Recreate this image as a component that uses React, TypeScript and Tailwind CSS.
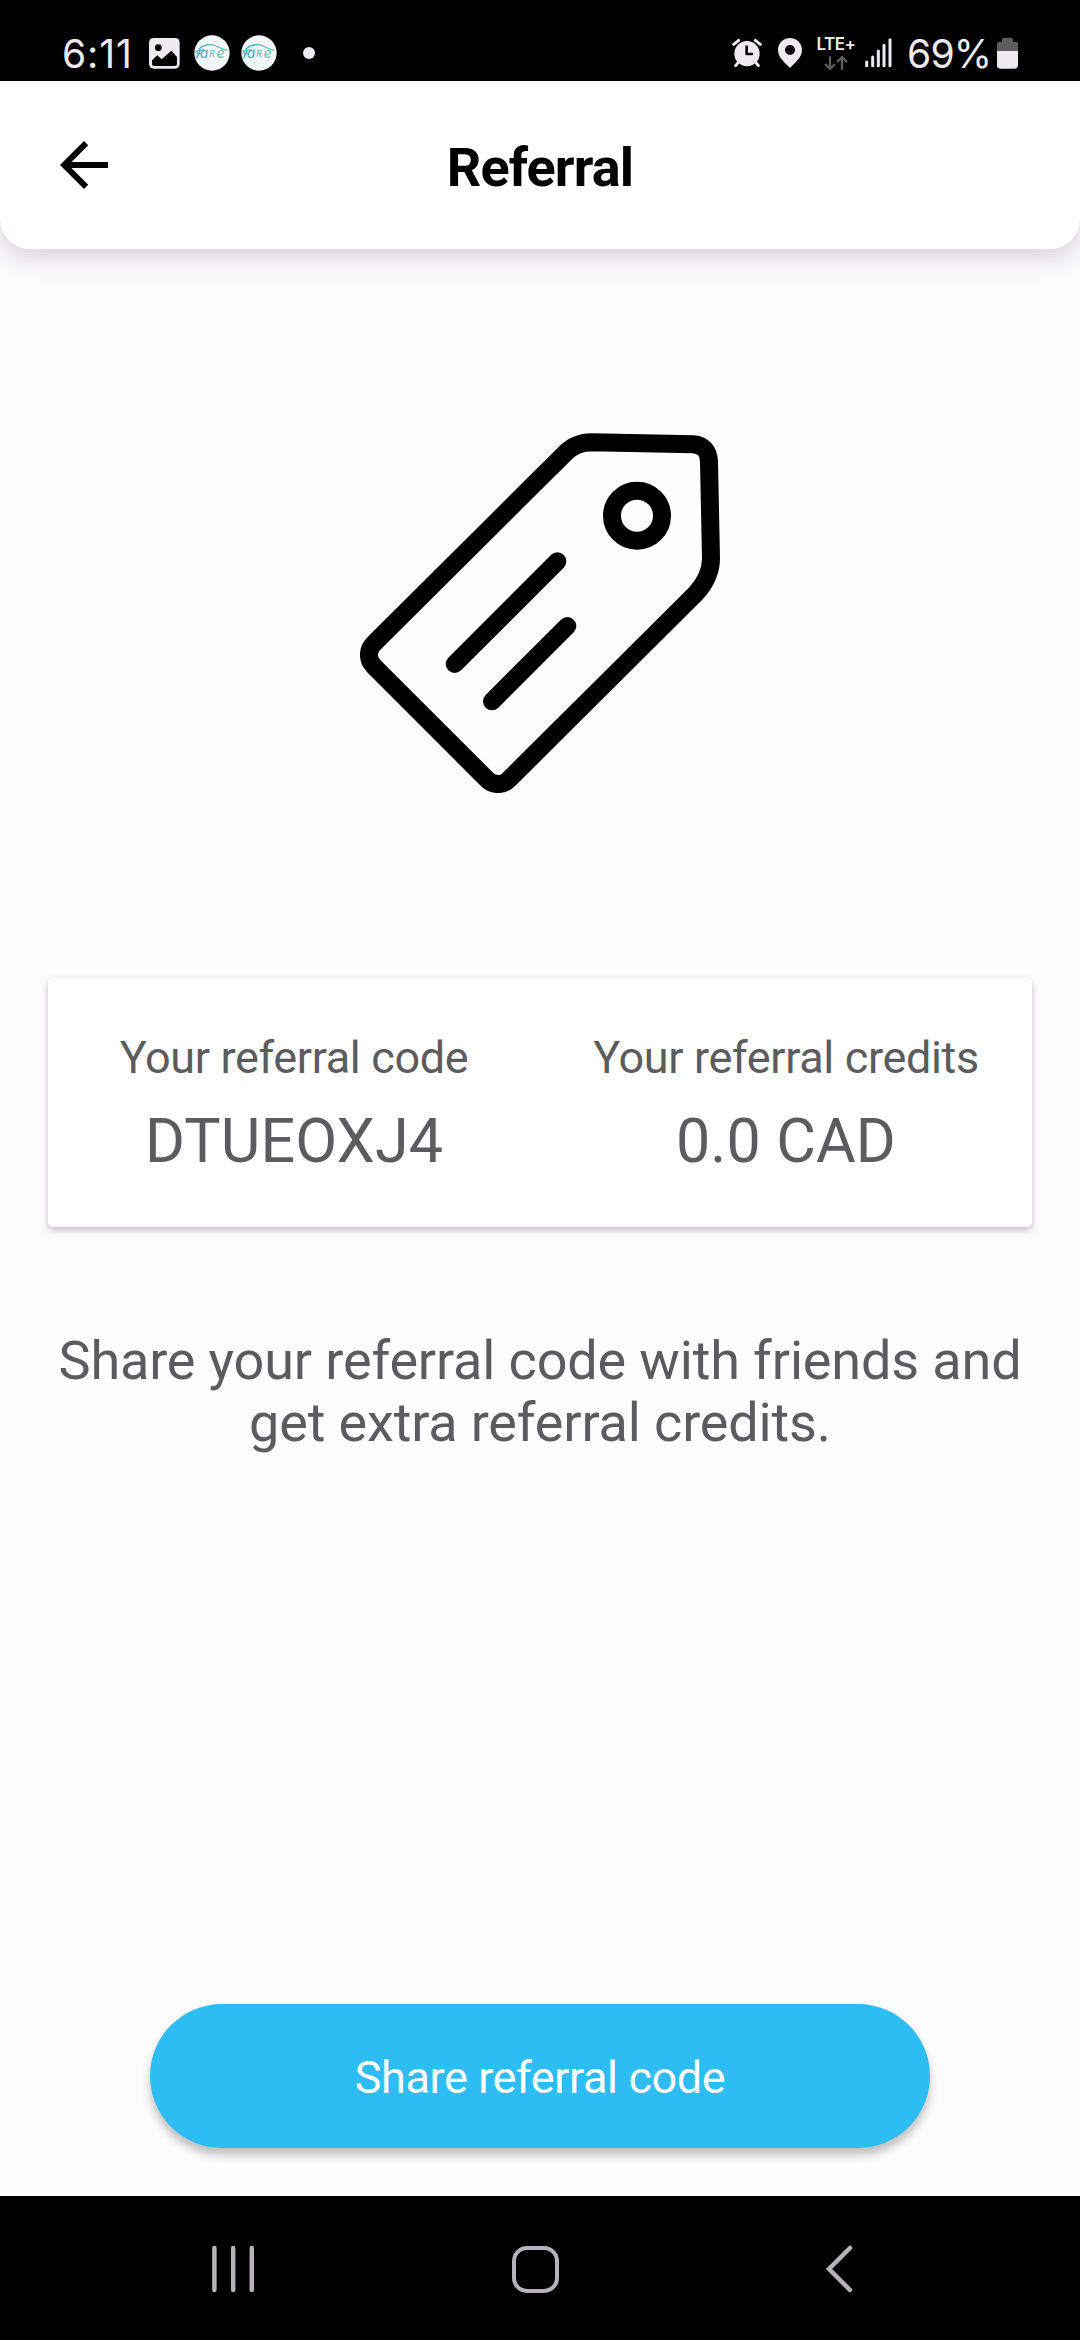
import type { ReactNode } from "react"

const stats = [
  { label: "Your referral code", value: "DTUEOXJ4" },
  { label: "Your referral credits", value: "0.0 CAD" },
]

function FareBadge({ id }: { id: string }) {
  return (
    <svg className="h-9 w-9 shrink-0" viewBox="0 0 108 108" fill="none">
      <defs>
        <linearGradient id={id} x1="0" y1="0" x2="108" y2="0" gradientUnits="userSpaceOnUse">
          <stop stopColor="#35a3cf" />
          <stop offset="1" stopColor="#6cc396" />
        </linearGradient>
      </defs>
      <circle cx="54" cy="54" r="53" fill="#f3f6f7" />
      <path d="M14 43C24 32 36 29 50 29C68 29 78 42 100 46" stroke={`url(#${id})`} strokeWidth="4" />
      <path d="M4 52C12 45 20 44 32 45M19 46L8 70M8 56H20" stroke={`url(#${id})`} strokeWidth="4" />
      <g fill={`url(#${id})`} className="font-['Inter',sans-serif] italic">
        <text x="18" y="68" className="text-[40px]">a</text>
        <text x="46" y="66" className="text-[26px]">R</text>
        <text x="68" y="68" className="text-[40px]">e</text>
      </g>
    </svg>
  )
}

function StatusBar() {
  return (
    <div className="flex h-[81px] justify-between bg-black pr-[62px] pl-[62px] font-['Inter',sans-serif] text-[#edebef]">
      <div className="flex items-center pt-[25px]">
        <span className="w-[87px] text-[39px] leading-none font-normal tracking-[0.9px]">6:11</span>
        <svg className="h-[31px] w-[31px]" viewBox="0 0 93 93">
          <rect width="92" height="92" rx="14" fill="#edebef" />
          <circle cx="28" cy="29" r="10" fill="#000" />
          <path d="M9 67L25 52L38 64L67 38L84 57V78Q84 84 78 84H15Q9 84 9 78Z" fill="#000" />
        </svg>
        <div className="ml-[14px] flex gap-[11px]">
          <FareBadge id="fareOne" />
          <FareBadge id="fareTwo" />
        </div>
        <div className="ml-[26px] h-3 w-3 rounded-full bg-[#edebef]" />
      </div>

      <div className="flex items-center pt-[25px]">
        <svg className="h-[30px] w-[30px]" viewBox="61 55 90 90" fill="none">
          <circle cx="106" cy="102" r="38" fill="#edebef" />
          <path d="M66 74L81 62M131 62L146 74M80 128L72 138M132 128L140 138" stroke="#edebef" strokeWidth="9" strokeLinecap="round" />
          <path d="M105 81V103H121" stroke="#000" strokeWidth="8" strokeLinecap="round" strokeLinejoin="round" />
        </svg>
        <svg className="ml-4 h-[30px] w-6" viewBox="201 53 72 90">
          <path
            fillRule="evenodd"
            fill="#edebef"
            d="M237 53C217 53 201 69 201 89C201 112 222 127 237 143C252 127 273 112 273 89C273 69 257 53 237 53ZM237 74A15 15 0 1 1 237 104A15 15 0 1 1 237 74Z"
          />
        </svg>
        <div className="ml-[14px] flex w-10 flex-col items-center">
          <span className="text-[17px] leading-[15px] font-semibold tracking-[-0.5px]">LTE+</span>
          <svg className="mt-[4px] h-[14px] w-6" viewBox="339 106 72 42" fill="none" stroke="#5d5c5f" strokeWidth="7">
            <path d="M357 107V144M342 130L357 145L372 130M393 147V110M378 124L393 109L408 124" />
          </svg>
        </div>
        <svg className="ml-[9px] h-[30px] w-[27px]" viewBox="462 53 81 90" stroke="#edebef" strokeWidth="9" strokeLinecap="round">
          <path d="M467 125V136M485 110V136M502 92V136M519 75V136M537 58V136" />
        </svg>
        <span className="ml-[15px] w-[87px] text-[39px] leading-none font-normal tracking-[-0.8px]">69%</span>
        <svg className="ml-[3px] h-[32px] w-[21px]" viewBox="861 50 63 94">
          <path d="M861 91V70Q861 63 868 63H876V57Q876 51 882 51H903Q909 51 909 57V63H917Q924 63 924 70V91Z" fill="#5d5c5f" />
          <path d="M861 91H924V134Q924 144 914 144H871Q861 144 861 134Z" fill="#edebef" />
        </svg>
      </div>
    </div>
  )
}

function Header({ children }: { children: ReactNode }) {
  return (
    <header className="grid h-[168px] grid-cols-[120px_1fr_120px] items-center rounded-b-[30px] bg-[#fefefe] shadow-[0_10px_24px_rgba(40,30,45,0.18)]">
      <svg className="ml-12 h-[72px] w-[72px]" viewBox="0 0 24 24" fill="#000">
        <path d="M20 11H7.83l5.59-5.59L12 4l-8 8 8 8 1.41-1.41L7.83 13H20v-2z" />
      </svg>
      <h1 className="pt-[6px] text-center text-[54px] leading-none font-bold tracking-[-0.9px] text-black">{children}</h1>
    </header>
  )
}

function TagIcon() {
  return (
    <svg className="h-[360px] w-[360px]" viewBox="60 69 1080 1080" fill="none" stroke="#000" strokeWidth="54" strokeLinecap="round">
      <path d="M755 97L1060 103Q1105 107 1107 155L1113 445C1113 484 1095 520 1068 550L507 1108C489 1127 460 1127 441 1108L101 768C82 748 82 720 102 700L675 130C697 108 725 97 755 97Z" />
      <circle cx="891" cy="317" r="75" />
      <path d="M344 762L652 454M456 874L682 648" />
    </svg>
  )
}

function NavBar() {
  return (
    <nav className="grid h-36 grid-cols-[301px_1fr_28px] items-center bg-black pt-[2px] pr-[227px] pl-[211px] text-[#b5b3b7]">
      <svg className="h-12 w-11" viewBox="0 0 44 48" stroke="currentColor" strokeWidth="4.5" strokeLinecap="round">
        <path d="M3.4 3V45M22.2 3V45M40.8 3V45" />
      </svg>
      <div className="h-[47px] w-[47px] rounded-[15px] border-[4.5px] border-[#b5b3b7]" />
      <svg className="h-12 w-[28px]" viewBox="0 0 28 48" fill="none" stroke="currentColor" strokeWidth="4.5" strokeLinecap="round">
        <path d="M25 3L4 24L25 45" />
      </svg>
    </nav>
  )
}

export default function App() {
  return (
    <div className="flex h-[2340px] w-[1080px] flex-col bg-[#fefdfe] font-['Roboto',sans-serif] text-[#5c5b5e]">
      <StatusBar />
      <Header>Referral</Header>

      <main className="flex flex-1 flex-col items-center pt-[184px]">
        <TagIcon />

        <section className="mt-[185px] grid h-[249px] w-[984px] grid-cols-2 rounded-[5px] bg-[#fefefe] pt-[53px] text-center shadow-[0_3px_7px_rgba(40,30,45,0.28)]">
          {stats.map((stat) => (
            <div key={stat.label}>
              <p className="text-[45px] leading-[53px] tracking-[-0.35px]">{stat.label}</p>
              <p className="mt-[21px] text-[61px] leading-[72px] tracking-[0.1px]">{stat.value}</p>
            </div>
          ))}
        </section>

        <p className="mt-[103px] text-center text-[54px] leading-[62px] tracking-[-0.15px]">
          Share your referral code with friends and
          <br />
          get extra referral credits.
        </p>

        <button className="mt-auto mb-12 h-36 w-[780px] rounded-full bg-[#2ebdf2] pt-[3px] text-[45px] tracking-[-0.4px] text-white shadow-[0_7px_10px_rgba(0,0,0,0.25)]">
          Share referral code
        </button>
      </main>

      <NavBar />
    </div>
  )
}
